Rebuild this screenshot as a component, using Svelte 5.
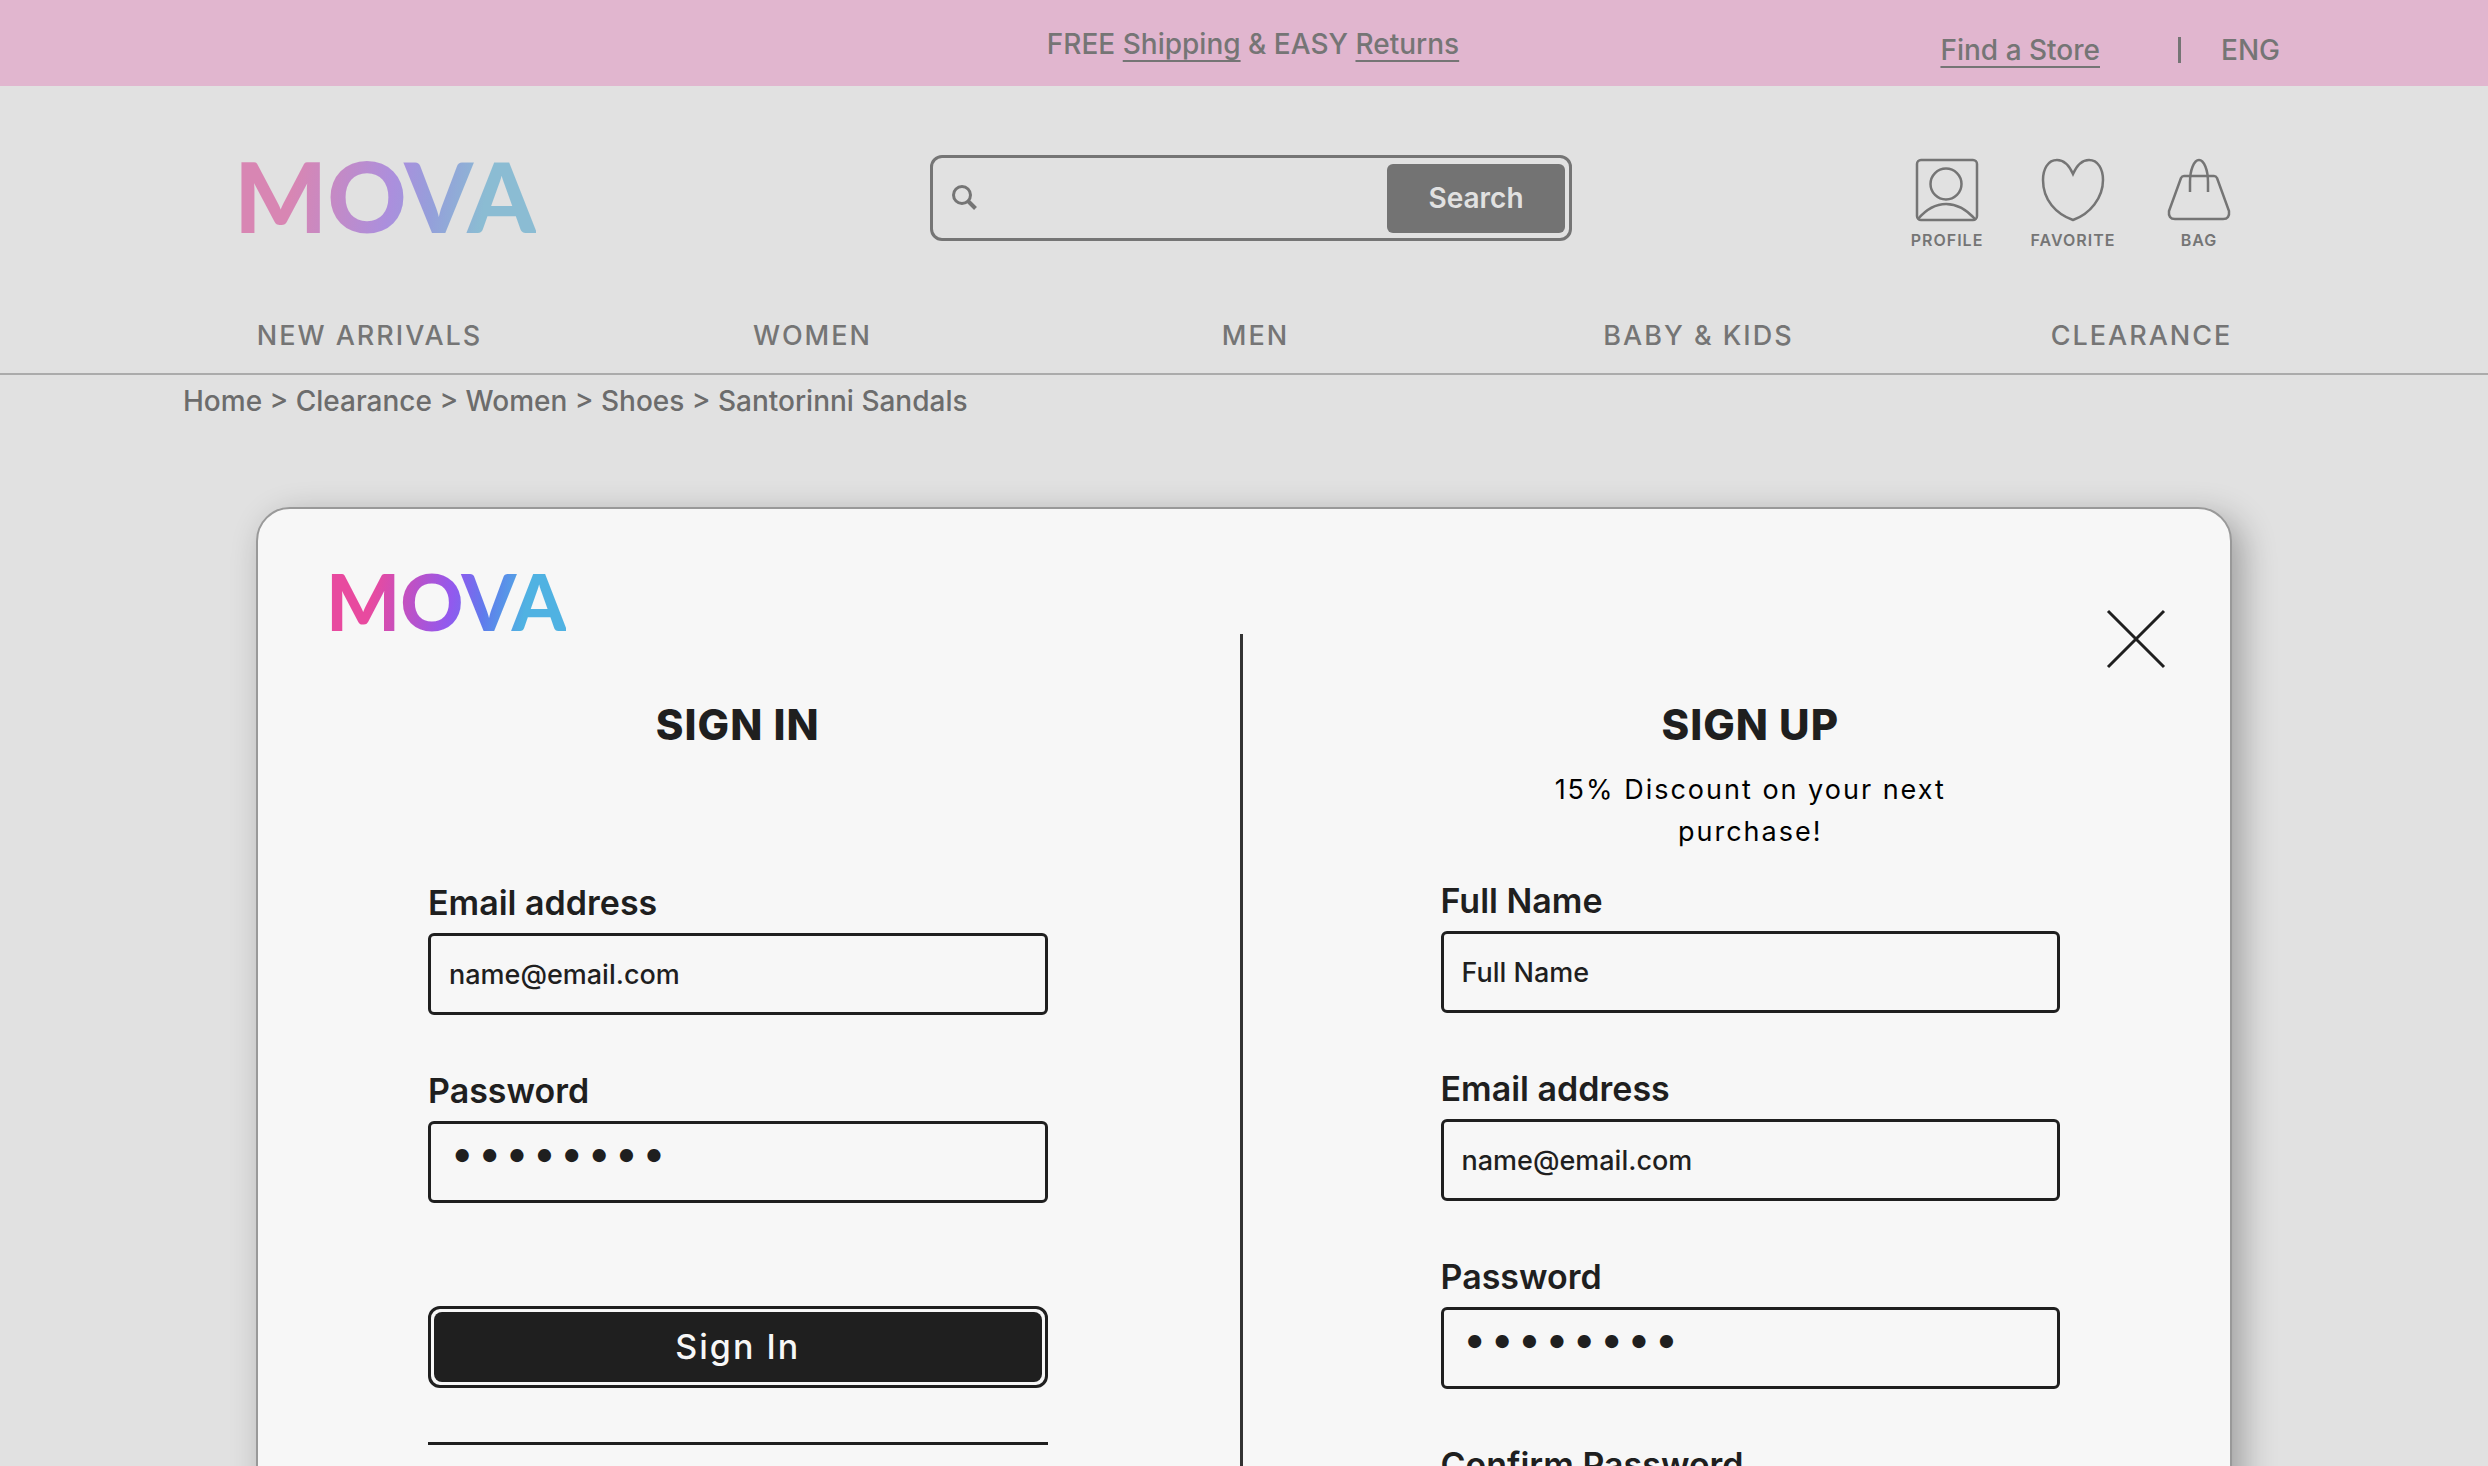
<script>
    let search = "";
    let navLinks = ["NEW ARRIVALS", "WOMEN", "MEN", "BABY & KIDS", "CLEARANCE"];
    let crumbs = ["Home", "Clearance", "Women", "Shoes", "Santorinni Sandals"];

    let signIn = [
        {id: "in-email", label: "Email address", type: "email", placeholder: "name@email.com"},
        {id: "in-password", label: "Password", type: "password", value: "sandals1"},
    ];
    let signUp = [
        {id: "up-name", label: "Full Name", type: "text", placeholder: "Full Name"},
        {id: "up-email", label: "Email address", type: "email", placeholder: "name@email.com"},
        {id: "up-password", label: "Password", type: "password", value: "sandals1"},
        {id: "up-confirm", label: "Confirm Password", type: "password", value: "sandals1"},
    ];
</script>

<div class="page">
    <div class="promo">
        <p>FREE <a href="#shipping">Shipping</a> &amp; EASY <a href="#returns">Returns</a></p>
        <div class="promo-right">
            <a href="#stores">Find a Store</a>
            <span class="bar"></span>
            <span>ENG</span>
        </div>
    </div>

    <header>
        <div class="top">
            <a class="logo faded" href="#home">MOVA</a>
            <form class="search" on:submit|preventDefault>
                <svg width="26" height="26" viewBox="0 0 26 26" fill="none" stroke="#757575">
                    <circle cx="10" cy="10" r="8.5" stroke-width="3"/>
                    <path d="M16 16l7.5 7.5" stroke-width="4"/>
                </svg>
                <input type="text" aria-label="Search products" bind:value={search}>
                <button type="submit">Search</button>
            </form>
            <div class="icons">
                <a href="#profile">
                    <svg width="64" height="64" viewBox="0 0 64 64">
                        <rect x="2" y="2" width="60" height="60" rx="4"/>
                        <circle cx="31" cy="26" r="15.5"/>
                        <path d="M3 61C20 41 42 41 60 61"/>
                    </svg>
                    PROFILE
                </a>
                <a href="#favorite">
                    <svg width="64" height="64" viewBox="0 0 64 64">
                        <path d="M32 16C28 7 22 2 16 2C7 2 2 11 2 22C2 42 15 56 32 62C49 56 62 40 62 22C62 11 57 2 48 2C42 2 36 7 32 16Z"/>
                    </svg>
                    FAVORITE
                </a>
                <a href="#bag">
                    <svg width="64" height="64" viewBox="0 0 64 64">
                        <path d="M17 18h30q2 0 3 2L62 53q1 8-6 8H8q-7 0-6-8L14 20q1-2 3-2z"/>
                        <path d="M23 34V24C23 12 27 2 32 2S41 12 41 24V34"/>
                    </svg>
                    BAG
                </a>
            </div>
        </div>
        <nav>
            {#each navLinks as link}
                <a href="#nav">{link}</a>
            {/each}
        </nav>
    </header>

    <p class="crumbs">{crumbs.join(" > ")}</p>

    <div class="modal" role="dialog" aria-label="Sign in or sign up">
        <button class="close" aria-label="Close">
            <svg width="60" height="60" viewBox="0 0 60 60" fill="none" stroke="#1f1f1f" stroke-width="3">
                <path d="M2 2L58 58M58 2L2 58"/>
            </svg>
        </button>

        <section class="pane left">
            <div class="logo small">MOVA</div>
            <form on:submit|preventDefault>
                <h2>SIGN IN</h2>
                <div class="fields">
                    {#each signIn as field}
                        <div class="field">
                            <label for={field.id}>{field.label}</label>
                            <input id={field.id} type={field.type} placeholder={field.placeholder} value={field.value ?? ""}>
                        </div>
                    {/each}
                </div>
                <button class="submit" type="submit"><span>Sign In</span></button>
                <hr>
            </form>
        </section>

        <div class="divider"></div>

        <section class="pane right">
            <form on:submit|preventDefault>
                <h2>SIGN UP</h2>
                <p class="offer">15% Discount on your next purchase!</p>
                <div class="fields">
                    {#each signUp as field}
                        <div class="field">
                            <label for={field.id}>{field.label}</label>
                            <input id={field.id} type={field.type} placeholder={field.placeholder} value={field.value ?? ""}>
                        </div>
                    {/each}
                </div>
            </form>
        </section>
    </div>
</div>

<style>
    .page {
        height: 100vh;
        overflow: hidden;
        background: #e1e1e1;
        color: #757575;
        font-family: Inter, "Liberation Sans", sans-serif;
        font-size: 28px;
        line-height: 34px;
        font-weight: 500;
    }
    .page * {
        box-sizing: border-box;
    }
    p, h2 {
        margin: 0;
    }
    a {
        color: inherit;
        text-decoration: none;
    }
    input, button {
        font: inherit;
        color: inherit;
        background: none;
        border: none;
        padding: 0;
    }

    .promo {
        display: grid;
        grid-template-columns: 1fr auto 1fr;
        padding: 21px 208px 19px 226px;
        height: 86px;
        background: #e1b6cf;
    }
    .promo p {
        grid-column: 2;
        align-self: center;
    }
    .promo a {
        text-decoration: underline;
        text-decoration-thickness: 2px;
        text-underline-offset: 6px;
        text-decoration-skip-ink: none;
    }
    .promo-right {
        display: flex;
        justify-content: flex-end;
        align-items: center;
        align-self: end;
    }
    .bar {
        width: 3px;
        height: 26px;
        margin: 0 40px 0 78px;
        background: #757575;
    }

    header {
        border-bottom: 2px solid #ababab;
    }
    .top {
        display: grid;
        grid-template-columns: 1fr 642px 1fr;
        padding: 69px 226px 0 240px;
    }
    .logo {
        justify-self: start;
        align-self: start;
        margin-left: -6px;
        font-family: Lato, Inter, sans-serif;
        font-size: 98px;
        line-height: 80px;
        font-weight: 900;
        color: transparent;
        background: linear-gradient(100deg, #e84a9f 20%, #9259ee 52%, #5f7cec 66%, #50b2e2 82%);
        -webkit-background-clip: text;
        background-clip: text;
    }
    .faded {
        background-image: linear-gradient(100deg, #d886b3 20%, #ab8fdd 52%, #94a0da 66%, #8bbcd3 82%);
    }
    .search {
        display: flex;
        align-items: center;
        height: 86px;
        padding: 6px 4px 6px 19px;
        border: 3px solid #757575;
        border-radius: 12px;
    }
    .search input {
        flex: 1;
        min-width: 0;
        height: 60px;
        padding: 0 12px;
    }
    .search button {
        width: 178px;
        height: 69px;
        border-radius: 6px;
        background: #737373;
        color: #e1e1e1;
        font-weight: 600;
    }
    .icons {
        display: flex;
        justify-content: flex-end;
        padding-top: 3px;
    }
    .icons a {
        display: flex;
        flex-direction: column;
        align-items: center;
        gap: 8px;
        width: 126px;
        font-size: 16px;
        line-height: 20px;
        font-weight: 600;
        letter-spacing: 1px;
    }
    .icons svg {
        fill: none;
        stroke: #757575;
        stroke-width: 2.5;
    }
    nav {
        display: grid;
        grid-template-columns: repeat(5, 1fr);
        padding: 69px 125px 20px 148px;
        font-size: 27px;
        text-align: center;
        letter-spacing: 2px;
    }
    .crumbs {
        padding: 9px 183px 0;
        color: #6c6c6c;
    }

    .modal {
        position: relative;
        display: grid;
        grid-template-columns: minmax(0, 1fr) 3px minmax(0, 1fr);
        min-height: 1300px;
        margin: 89px 256px 0;
        padding-right: 6px;
        border: 2px solid #999;
        border-radius: 34px;
        background: #f7f7f7;
        color: #1f1f1f;
        box-shadow: 10px 10px 34px rgba(0, 0, 0, 0.3);
    }
    .close {
        position: absolute;
        top: 100px;
        right: 64px;
        width: 60px;
        height: 60px;
        cursor: pointer;
    }
    .close svg {
        display: block;
    }
    .divider {
        margin-top: 125px;
        background: #333;
    }
    .pane form {
        display: flex;
        flex-direction: column;
    }
    .left {
        padding: 57px 192px 0 74px;
    }
    .left form {
        padding: 65px 0 0 96px;
    }
    .right {
        padding: 192px 164px 0 198px;
    }
    .small {
        width: max-content;
        font-size: 78px;
        line-height: 70px;
    }
    h2 {
        font-size: 42px;
        line-height: 48px;
        font-weight: 800;
        letter-spacing: 1px;
        text-align: center;
    }
    .offer {
        width: 460px;
        margin: 20px auto 28px;
        color: #000;
        font-size: 27px;
        line-height: 42px;
        font-weight: 400;
        letter-spacing: 2px;
        text-align: center;
    }
    .fields {
        display: flex;
        flex-direction: column;
        gap: 56px;
    }
    .left .fields {
        margin-top: 134px;
    }
    .field {
        display: flex;
        flex-direction: column;
        gap: 10px;
    }
    label {
        font-size: 34px;
        line-height: 40px;
        font-weight: 600;
    }
    .field input {
        width: 100%;
        height: 82px;
        padding: 0 18px;
        border: 3px solid #1f1f1f;
        border-radius: 6px;
        font-size: 27px;
    }
    .field input::placeholder {
        color: #1f1f1f;
        opacity: 1;
    }
    .field input[type="password"] {
        padding: 0 20px 20px;
        font-size: 42px;
        letter-spacing: 5px;
    }
    .submit {
        height: 82px;
        margin-top: 103px;
        padding: 3px;
        border: 3px solid #1f1f1f;
        border-radius: 12px;
        color: #f7f7f7;
        font-size: 34px;
        letter-spacing: 2px;
        cursor: pointer;
    }
    .submit span {
        display: flex;
        align-items: center;
        justify-content: center;
        height: 100%;
        border-radius: 8px;
        background: #1f1f1f;
    }
    hr {
        width: 100%;
        height: 3px;
        margin: 54px 0 0;
        border: none;
        background: #1f1f1f;
    }
</style>
